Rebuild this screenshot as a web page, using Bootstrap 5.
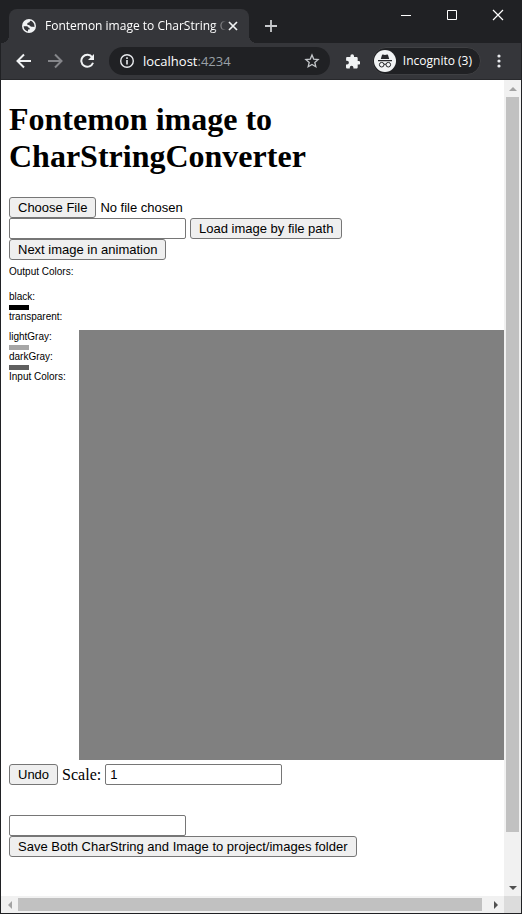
<!DOCTYPE html>
<html lang="en">
<head>
<meta charset="utf-8">
<meta name="viewport" content="width=device-width, initial-scale=1">
<title>Fontemon image to CharString Converter</title>
<link href="https://cdn.jsdelivr.net/npm/bootstrap@5.3.0/dist/css/bootstrap.min.css" rel="stylesheet">
<style>
  .browser { background: #202124; padding: 0 1px 1px; font-family: "Open Sans", "Noto Sans", sans-serif; color: #fff; }
  .browser svg { display: block; flex: none; }
  .chrome-btn { border: 0; background: none; padding: 0; color: #f1f3f4; display: block; flex: none; }
  .tab-strip { height: 43px; padding-left: 8px; }
  .site-tab { width: 240px; height: 34px; background: #35363a; border-radius: 8px 8px 0 0; padding: 0 11px 0 13px; position: relative; flex: none; }
  .site-tab::before, .site-tab::after { content: ""; position: absolute; bottom: 0; width: 8px; height: 8px; }
  .site-tab::before { left: -8px; background: radial-gradient(circle at 0 0, #202124 8px, #35363a 8px); }
  .site-tab::after { right: -8px; background: radial-gradient(circle at 100% 0, #202124 8px, #35363a 8px); }
  .tab-title { font-size: 12px; line-height: 16px; margin: 0 2px 0 9px; white-space: nowrap; -webkit-mask-image: linear-gradient(90deg, #000 93%, transparent); mask-image: linear-gradient(90deg, #000 93%, transparent); }
  .win-controls { gap: 34px; padding: 9px 17px 0 0; }
  .tool-bar { height: 37px; background: #35363a; border-bottom: 1px solid #28292c; padding: 0 16px 0 13px; }
  .address { height: 28px; border-radius: 14px; background: #202124; margin-left: 13px; padding: 0 10px; min-width: 0; }
  .address-text { font-size: 13px; line-height: 20px; color: #fff; text-decoration: none; margin-left: 8px; }
  .address-port { color: #9aa0a6; }
  .profile { height: 28px; border-radius: 14px; background: #202124; border: 1px solid #3f4043; color: #fff; font-size: 12px; line-height: 16px; padding: 0 8px 0 1px; gap: 7px; margin: 0 12px; white-space: nowrap; }
  .document { background: #fff; color: #000; font: 16px/18px "Liberation Serif", serif; padding: 21px 0 0 8px; }
  .document h1 { font-size: 32px; line-height: 37px; font-weight: 700; margin: 0 8px 22px 0; }
  .plain-btn, .plain-input, .file-pick, .file-pick::file-selector-button { font: 13px/15px "Liberation Sans", Arial, sans-serif; color: #000; }
  .plain-btn, .file-pick::file-selector-button { height: 21px; background: #efefef; border: 1px solid #767676; border-radius: 3px; padding: 1px 8px 2px; white-space: nowrap; }
  .file-pick { height: 21px; }
  .file-pick::file-selector-button { margin: 0 4px 0 0; }
  .plain-input { width: 177px; height: 21px; border: 1px solid #767676; border-radius: 2px; padding: 1px 4px; background: #fff; }
  .palette { width: 70px; padding-top: 5px; font: 10px/13px "Liberation Sans", Arial, sans-serif; flex: none; }
  .palette-title { height: 25px; }
  .swatch { width: 20px; height: 5px; margin-top: 2px; }
  .drawing { height: 500px; }
  .canvas-area { background: #808080; margin-top: 70px; }
  .save-group { margin-top: 30px; }
  .scroll-col { width: 17px; background: #f1f1f1; }
  .scroll-row { height: 17px; background: #f1f1f1; }
  .scroll-btn { width: 17px; height: 17px; flex: none; display: flex; align-items: center; justify-content: center; padding: 0; border: 0; background: none; }
  .thumb-v { height: 94%; width: 13px; background: #c1c1c1; margin: 0 auto; }
  .thumb-h { width: 99%; height: 13px; background: #c1c1c1; }
  .scroll-corner { width: 17px; background: #dcdcdc; }
</style>
<script src="https://cdn.jsdelivr.net/npm/bootstrap@5.3.0/dist/js/bootstrap.bundle.min.js"></script>
</head>
<body>
<div class="browser vh-100 d-flex flex-column overflow-hidden">
  <header>
    <div class="tab-strip d-flex">
      <div class="site-tab d-flex align-items-center align-self-end">
        <svg width="14" height="14" viewBox="0 0 14 14"><circle cx="7" cy="7" r="7" fill="#f1f3f4"/><path d="M1.600 7.300h3.200c1.300 0 1.500 1.800 2.800 1.800v1.300H6v2C3.500 12 1.700 10 1.600 7.300ZM8.400 1.800C7.600 2.300 7.900 3.300 6.800 3.600 5.500 3.900 5 4.600 5.300 5.400c.5 1 2 .4 2.600 1.300.5.800 1.300 1.300 2.300 1.100.9-.2 1.200.2 2.200.1C12.900 5 11 2.300 8.400 1.800Z" fill="#35363a"/></svg>
        <div class="tab-title flex-grow-1 overflow-hidden">Fontemon image to CharString C</div>
        <button class="chrome-btn" aria-label="Close tab"><svg width="10" height="10" viewBox="0 0 10 10" stroke="currentColor" stroke-width="1.7"><path d="m1 1 8 8M9 1 1 9"/></svg></button>
      </div>
      <button class="chrome-btn ms-3 mt-2" aria-label="New tab"><svg width="12" height="12" viewBox="0 0 12 12" stroke="#c8cacd" stroke-width="1.8"><path d="M6 0v12M0 6h12"/></svg></button>
      <div class="win-controls d-flex align-items-start ms-auto">
        <button class="chrome-btn" aria-label="Minimize"><svg width="12" height="12" viewBox="0 0 12 12" stroke="#fff"><path d="M1 6.500h10"/></svg></button>
        <button class="chrome-btn" aria-label="Maximize"><svg width="12" height="12" viewBox="0 0 12 12" fill="none" stroke="#fff"><path d="M1.500 1.500h9v9h-9z"/></svg></button>
        <button class="chrome-btn" aria-label="Close window"><svg width="12" height="12" viewBox="0 0 12 12" stroke="#fff" stroke-width="1.200"><path d="m1 1 10 10M11 1 1 11"/></svg></button>
      </div>
    </div>
    <div class="tool-bar d-flex align-items-center">
      <div class="d-flex gap-3">
        <button class="chrome-btn" aria-label="Back"><svg width="18" height="16" viewBox="0 0 18 16" fill="none" stroke="#f1f3f4" stroke-width="2"><path d="M17 8H4.500M10 1.500 3.500 8 10 14.500"/></svg></button>
        <button class="chrome-btn" aria-label="Forward"><svg width="16" height="16" viewBox="0 0 16 16" fill="none" stroke="#85868a" stroke-width="2"><path d="M0 8h12.500M7 1.500 13.500 8 7 14.500"/></svg></button>
        <button class="chrome-btn" aria-label="Reload"><svg width="16" height="16" viewBox="0 0 16 16" fill="none" stroke="#f1f3f4" stroke-width="2"><path d="M12.200 4.300A6 6 0 1 0 13 9.700"/><path d="M14 1v6H8z" fill="#f1f3f4" stroke="none"/></svg></button>
      </div>
      <div class="address d-flex align-items-center flex-grow-1">
        <svg width="16" height="16" viewBox="0 0 16 16"><circle cx="8" cy="8" r="6.300" fill="none" stroke="#e8eaed" stroke-width="1.400"/><path d="M7.200 7h1.600v4.500H7.200zM7.200 4.300h1.600v1.600H7.200z" fill="#e8eaed"/></svg>
        <a class="address-text" href="#">localhost<span class="address-port">:4234</span></a>
        <button class="chrome-btn ms-auto" aria-label="Bookmark"><svg width="16" height="16" viewBox="0 0 16 16" fill="none" stroke="#c4c7ca" stroke-width="1.300"><path d="m8 2 1.700 4.100 4.400.4-3.300 2.900 1 4.300L8 11.400l-3.800 2.300 1-4.300-3.300-2.900 4.400-.4z"/></svg></button>
      </div>
      <button class="chrome-btn ms-3" aria-label="Extensions"><svg width="14" height="15" viewBox="0 0 14 15"><path d="M12.600 7H11.700V4.300C11.700 3.500 11.100 3 10.400 3H8V2a1.800 1.800 0 0 0-3.600 0v1H1.300C.6 3 .1 3.500.1 4.300v2.400H1a1.900 1.900 0 0 1 0 3.800H0v2.700c0 .8.6 1.300 1.300 1.300h2.500v-1a1.800 1.800 0 0 1 3.600 0v1h3c.7 0 1.300-.5 1.300-1.300v-2.600h.9a1.800 1.800 0 0 0 0-3.600Z" fill="#f1f3f4"/></svg></button>
      <button class="profile d-flex align-items-center"><svg width="22" height="22" viewBox="0 0 22 22"><circle cx="11" cy="11" r="11" fill="#f1f3f4"/><path d="m6.800 9 1.200-4q.2-.7.900-.5l2.100.5 2.100-.5q.7-.2.900.5l1.200 4ZM4 10h14v1.200H4z" fill="#27282b"/><g fill="none" stroke="#27282b"><circle cx="7.700" cy="14.700" r="2.300"/><circle cx="14.300" cy="14.700" r="2.300"/><path d="M10 14.400q1-.6 2 0"/></g></svg>Incognito (3)</button>
      <button class="chrome-btn mx-1" aria-label="Menu"><svg width="4" height="14" viewBox="0 0 4 14" fill="#e8eaed"><circle cx="2" cy="2" r="1.600"/><circle cx="2" cy="7" r="1.600"/><circle cx="2" cy="12" r="1.600"/></svg></button>
    </div>
  </header>
  <div class="d-flex flex-grow-1 overflow-hidden">
    <main class="document flex-grow-1 overflow-hidden">
      <h1>Fontemon image to CharStringConverter</h1>
      <div class="d-flex"><input class="file-pick" type="file" aria-label="Image file"></div>
      <div class="d-flex gap-1"><input class="plain-input" type="text" aria-label="File path"><button class="plain-btn">Load image by file path</button></div>
      <div class="d-flex"><button class="plain-btn">Next image in animation</button></div>
      <div class="drawing d-flex">
        <div class="palette">
          <div class="palette-title">Output Colors:</div>
          <div>black:</div><div class="swatch bg-black"></div>
          <div>transparent:</div><div class="swatch"></div>
          <div>lightGray:</div><div class="swatch" style="background:#a6a6a6"></div>
          <div>darkGray:</div><div class="swatch" style="background:#606060"></div>
          <div>Input Colors:</div>
        </div>
        <div class="canvas-area flex-grow-1"></div>
      </div>
      <div class="d-flex align-items-center gap-1 mt-1"><button class="plain-btn">Undo</button><label for="scale">Scale:</label><input class="plain-input" id="scale" type="text" value="1"></div>
      <div class="save-group d-flex flex-column align-items-start"><input class="plain-input" type="text" aria-label="Image name"><button class="plain-btn">Save Both CharString and Image to project/images folder</button></div>
    </main>
    <div class="scroll-col d-flex flex-column flex-shrink-0">
      <button class="scroll-btn" aria-label="Scroll up"><svg width="8" height="4" viewBox="0 0 8 4"><path d="M0 4 4 0l4 4z" fill="#a3a3a3"/></svg></button>
      <div class="flex-grow-1"><div class="thumb-v"></div></div>
      <button class="scroll-btn" aria-label="Scroll down"><svg width="8" height="4" viewBox="0 0 8 4"><path d="m0 0 4 4 4-4z" fill="#505050"/></svg></button>
    </div>
  </div>
  <div class="scroll-row d-flex flex-shrink-0">
    <button class="scroll-btn" aria-label="Scroll left"><svg width="4" height="8" viewBox="0 0 4 8"><path d="M4 0 0 4l4 4z" fill="#a3a3a3"/></svg></button>
    <div class="flex-grow-1 d-flex align-items-center"><div class="thumb-h"></div></div>
    <button class="scroll-btn" aria-label="Scroll right"><svg width="4" height="8" viewBox="0 0 4 8"><path d="m0 0 4 4-4 4z" fill="#505050"/></svg></button>
    <div class="scroll-corner"></div>
  </div>
</div>
</body>
</html>
